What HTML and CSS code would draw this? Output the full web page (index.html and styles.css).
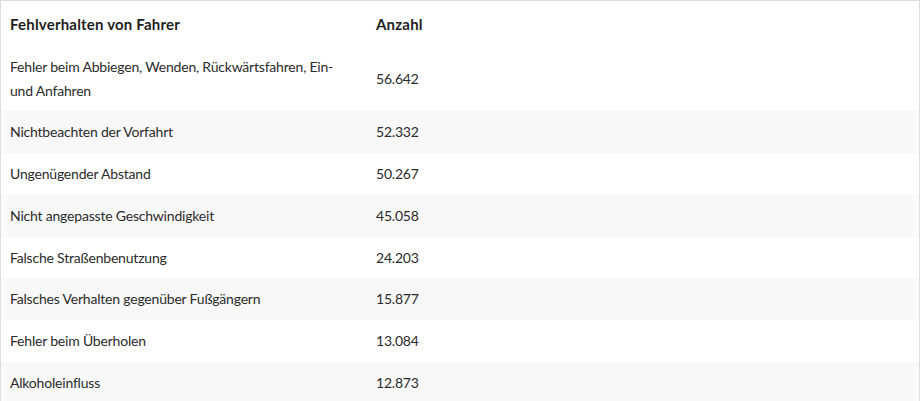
FILE: index.html
```html
<!DOCTYPE html>
<html lang="de">
<head>
<meta charset="utf-8">
<title>Fehlverhalten von Fahrer</title>
<link rel="stylesheet" href="styles.css">
</head>
<body>
<table class="data-table">
  <thead>
    <tr>
      <th class="col-label">Fehlverhalten von Fahrer</th>
      <th class="col-value">Anzahl</th>
      <th class="col-rest"></th>
    </tr>
  </thead>
  <tbody>
    <tr><td>Fehler beim Abbiegen, Wenden, Rückwärtsfahren, Ein- und Anfahren</td><td>56.642</td><td></td></tr>
    <tr><td>Nichtbeachten der Vorfahrt</td><td>52.332</td><td></td></tr>
    <tr><td>Ungenügender Abstand</td><td>50.267</td><td></td></tr>
    <tr><td>Nicht angepasste Geschwindigkeit</td><td>45.058</td><td></td></tr>
    <tr><td>Falsche Straßenbenutzung</td><td>24.203</td><td></td></tr>
    <tr><td>Falsches Verhalten gegenüber Fußgängern</td><td>15.877</td><td></td></tr>
    <tr><td>Fehler beim Überholen</td><td>13.084</td><td></td></tr>
    <tr><td>Alkoholeinfluss</td><td>12.873</td><td></td></tr>
  </tbody>
</table>
</body>
</html>
```
FILE: styles.css
```css
html, body {
  margin: 0;
  padding: 0;
  background: #ffffff;
}
body {
  font-family: Lato, "Open Sans", "Noto Sans", sans-serif;
  font-size: 14px;
  color: #2b2b2b;
}
.data-table {
  width: 920px;
  border-collapse: collapse;
  border: 1px solid #dddddd;
  border-bottom: none;
  table-layout: fixed;
}
.data-table th,
.data-table td {
  padding: 9px 9px;
  line-height: 23.7px;
  text-align: left;
  vertical-align: middle;
}
.data-table td {
  letter-spacing: -0.2px;
}
.data-table th {
  font-weight: 700;
  font-size: 15px;
  letter-spacing: 0.2px;
  color: #1e1e1e;
  padding-top: 11px;
  padding-bottom: 10px;
  line-height: 24px;
}
.col-label { width: 348px; }
.col-value { width: 120px; }
.data-table tbody tr:nth-child(even) {
  background: #f8f8f8;
}
```
